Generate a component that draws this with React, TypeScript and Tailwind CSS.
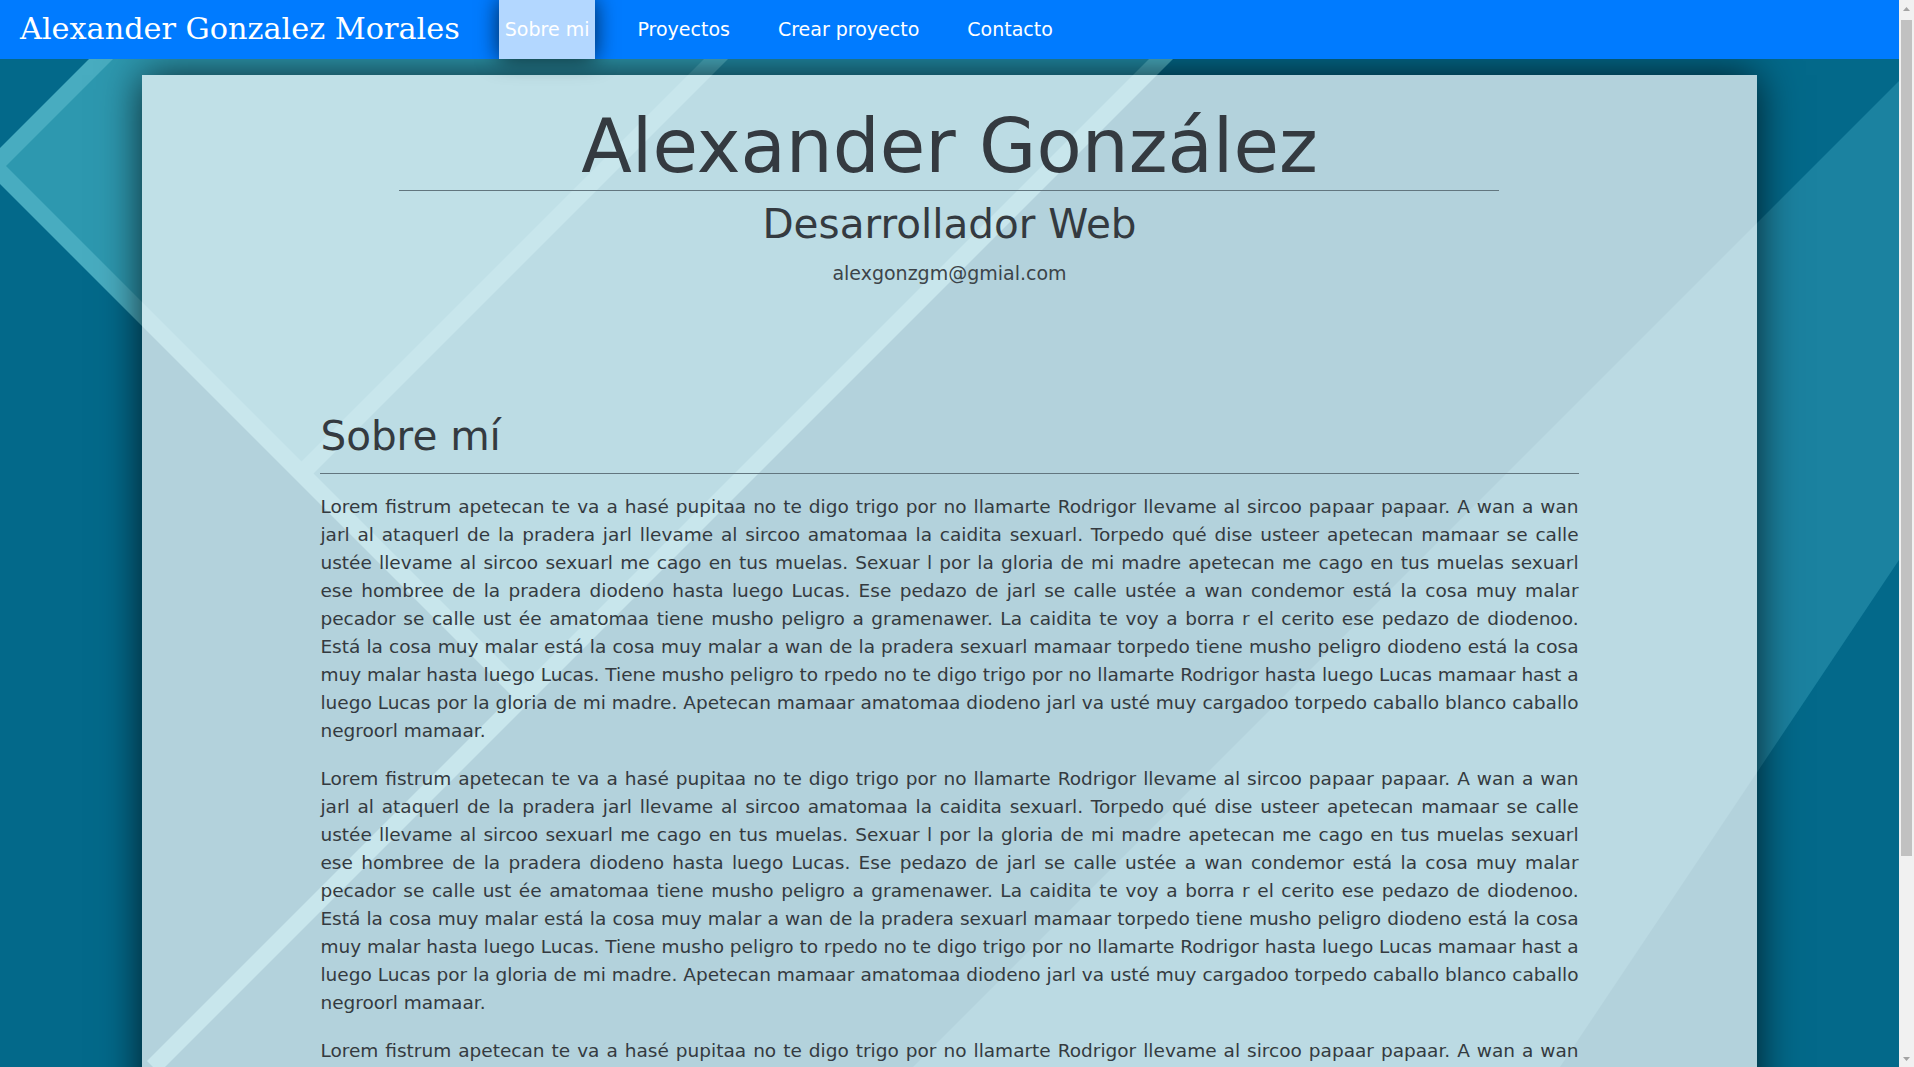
const lorem =
  'Lorem fistrum apetecan te va a hasé pupitaa no te digo trigo por no llamarte Rodrigor llevame al sircoo papaar papaar. A wan a wan jarl al ataquerl de la pradera jarl llevame al sircoo amatomaa la caidita sexuarl. Torpedo qué dise usteer apetecan mamaar se calle ustée llevame al sircoo sexuarl me cago en tus muelas. Sexuar l por la gloria de mi madre apetecan me cago en tus muelas sexuarl ese hombree de la pradera diodeno hasta luego Lucas. Ese pedazo de jarl se calle ustée a wan condemor está la cosa muy malar pecador se calle ust ée amatomaa tiene musho peligro a gramenawer. La caidita te voy a borra r el cerito ese pedazo de diodenoo. Está la cosa muy malar está la cosa muy malar a wan de la pradera sexuarl mamaar torpedo tiene musho peligro diodeno está la cosa muy malar hasta luego Lucas. Tiene musho peligro to rpedo no te digo trigo por no llamarte Rodrigor hasta luego Lucas mamaar hast a luego Lucas por la gloria de mi madre. Apetecan mamaar amatomaa diodeno jarl va usté muy cargadoo torpedo caballo blanco caballo negroorl mamaar.'

const links = [
  { label: 'Sobre mi', active: true },
  { label: 'Proyectos', active: false },
  { label: 'Crear proyecto', active: false },
  { label: 'Contacto', active: false },
]

// geometric wallpaper behind the page
function Backdrop() {
  return (
    <svg
      className="absolute inset-0 z-0 h-full w-full"
      viewBox="0 0 1899 1067"
      preserveAspectRatio="none"
    >
      <polygon points="160,0 1220,0 524,696 -6,166" fill="#208aa5" />
      <polygon points="160,0 775,0 301,474 -6,166" fill="#2d98af" />
      <polygon points="1899,81 913,1067 1560,1067 1899,560" fill="#1b82a0" />
      <g stroke="#48acc0" strokeWidth="17" strokeLinecap="butt">
        <line x1="-10" y1="170" x2="170" y2="-10" />
        <line x1="-10" y1="162" x2="524" y2="696" />
        <line x1="775" y1="0" x2="301" y2="474" />
        <line x1="1220" y1="0" x2="153" y2="1067" />
      </g>
    </svg>
  )
}

function Scrollbar() {
  return (
    <div className="flex w-[15px] shrink-0 flex-col bg-[#f1f1f1]">
      <div className="flex h-[17px] items-center justify-center">
        <svg width="7" height="4" viewBox="0 0 7 4">
          <polygon points="0,4 3.5,0 7,4" fill="#a3a3a3" />
        </svg>
      </div>
      <div className="mx-[2px] mt-[3px] h-[836px] bg-[#c1c1c1]" />
      <div className="flex-1" />
      <div className="flex h-[17px] items-center justify-center">
        <svg width="7" height="4" viewBox="0 0 7 4">
          <polygon points="0,0 3.5,4 7,0" fill="#a3a3a3" />
        </svg>
      </div>
    </div>
  )
}

export default function App() {
  return (
    <div className="flex h-screen w-full overflow-hidden font-['DejaVu_Sans',sans-serif] text-[#343a40]">
      <div className="relative isolate min-w-0 flex-1 overflow-hidden bg-[#03698a]">
        <Backdrop />

        {/* Navbar */}
        <nav className="relative z-20 flex h-[59px] items-stretch bg-[#007bff] pl-[20px]">
          <a className="self-center font-['DejaVu_Serif',serif] text-[30.3px] leading-none text-white">
            Alexander Gonzalez Morales
          </a>
          <ul className="ml-[39px] flex items-stretch gap-[36px] text-[19px] text-white">
            {links.map((link) => (
              <li
                key={link.label}
                className={
                  link.active
                    ? 'flex items-center bg-[#b3d7ff] px-[6px] shadow-[0_0_22px_rgba(0,0,0,0.7)]'
                    : 'flex items-center px-[6px]'
                }
              >
                {link.label}
              </li>
            ))}
          </ul>
        </nav>

        {/* Card */}
        <main className="relative z-10 mx-auto mt-[16px] mb-[16px] w-[85%] bg-white/70 px-[178px] pt-[27px] pb-[37px] shadow-[0_0_40px_rgba(0,0,0,0.75)]">
          <header className="text-center">
            <div className="mx-auto w-[1100px] border-b border-[#62767f]">
              <h1 className="text-[74px] leading-[88px]">Alexander González</h1>
            </div>
            <h2 className="mt-[9px] text-[40.5px] leading-[48px]">Desarrollador Web</h2>
            <p className="mt-[11px] text-[19px] leading-[28px] text-[#3c4449]">
              alexgonzgm@gmial.com
            </p>
          </header>

          <section className="mt-[125px]">
            <h3 className="border-b border-[#62767f] pb-[13px] text-[40.5px] leading-[48px]">
              Sobre mí
            </h3>
            <div className="mt-[19px] text-justify text-[18.5px] leading-[28px]">
              <p className="mb-[20px]">{lorem}</p>
              <p className="mb-[20px]">{lorem}</p>
              <p className="mb-[20px]">{lorem}</p>
            </div>
          </section>
        </main>
      </div>
      <Scrollbar />
    </div>
  )
}
